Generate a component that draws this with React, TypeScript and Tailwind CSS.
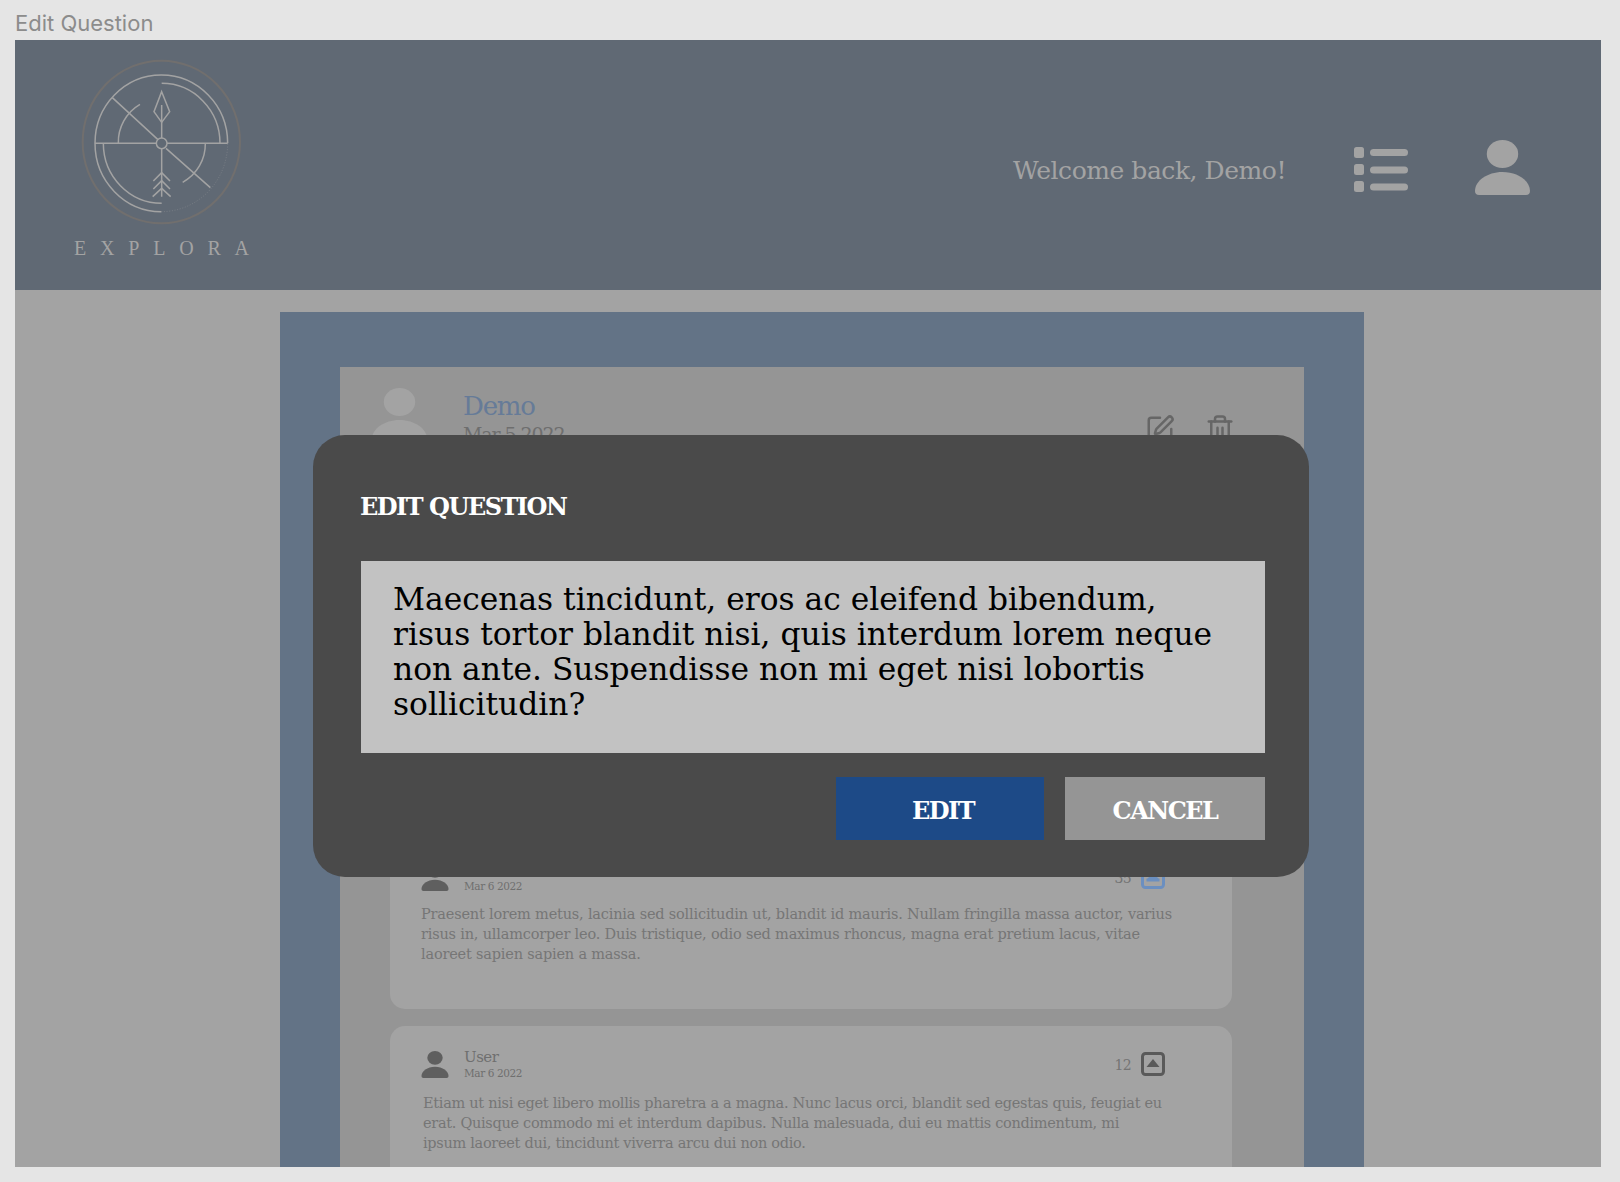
import { SquarePen, Trash2 } from "lucide-react"

const slab = "font-['DejaVu_Serif',serif]"

function Logo() {
  return (
    <svg width="210" height="186" viewBox="0 0 630 558" fill="none" stroke="#a3a3a3" strokeWidth="4.500">
      <ellipse cx="304" cy="276" rx="236" ry="244" stroke="#716f6e" strokeWidth="6" />
      <path d="M503 280A199 205 0 1 0 304 485" />
      <path d="M304 485A199 205 0 0 0 503 280" strokeOpacity=".35" strokeDasharray="3 5" strokeWidth="3" />
      <path d="M105 280H289M321 280H503" />
      <circle cx="305" cy="280" r="16" />
      <path d="M305 165V264M305 296V440" />
      <path d="M305 125L329 185L305 217L282 185Z" />
      <path d="M157 143L293 268M318 295L451 413" />
      <path d="M305 100A175 180 0 0 1 480 280" />
      <path d="M130 280A175 180 0 0 0 305 460" />
      <path d="M175 280A131 131 0 0 1 240 163" />
      <path d="M436 280A131 131 0 0 1 368 397" />
      <path d="M280 393L305 368L330 393M280 417L305 392L330 417M278 440L305 415L332 440" />
    </svg>
  )
}

function ListIcon() {
  return (
    <svg width="54" height="45" viewBox="0 0 54 45" fill="#a3a3a3">
      <rect x="0" y="0" width="10" height="11" rx="2.5" />
      <rect x="0" y="17" width="10" height="11" rx="2.5" />
      <rect x="0" y="34" width="10" height="11" rx="2.5" />
      <rect x="16" y="2" width="38" height="7" rx="3.5" />
      <rect x="16" y="19.5" width="38" height="7" rx="3.5" />
      <rect x="16" y="36.5" width="38" height="7" rx="3.5" />
    </svg>
  )
}

function UserIcon({ className, fill }: { className: string; fill: string }) {
  return (
    <svg className={className} viewBox="0 0 55 55" fill={fill}>
      <ellipse cx="27.5" cy="14" rx="15.7" ry="14" />
      <path d="M0 51C0 41 12 32 27.5 32S55 41 55 51C55 53.5 53.5 55 51 55H4C1.500 55 0 53.500 0 51Z" />
    </svg>
  )
}

function Upvote({ color, active }: { color: string; active?: boolean }) {
  return (
    <svg width="24" height="24" viewBox="0 0 24 24" fill="none">
      <rect x="1.500" y="1.500" width="21" height="21" rx="3" stroke={color} strokeWidth="3" />
      <path d="M12 7L18.500 15H5.500Z" fill={color} />
      {active && <rect x="5.500" y="13.500" width="13" height="3" fill={color} />}
    </svg>
  )
}

function Answer({ votes, active, text, textClass, className }: { votes: number; active?: boolean; text: string[]; textClass: string; className: string }) {
  return (
    <div className={`w-[842px] rounded-[15px] bg-[#a3a3a3] px-[31px] ${className}`}>
      <div className="flex items-start">
        <UserIcon className="h-[27px] w-[28px]" fill="#5f5f5f" />
        <div className="ml-[15px] -mt-[3px]">
          <div className={`${slab} text-[15px] leading-[19px] tracking-[-0.5px] text-[#6f6f6f]`}>User</div>
          <div className={`${slab} text-[10.5px] leading-[12px] tracking-[-0.4px] text-[#6f6f6f]`}>Mar 6 2022</div>
        </div>
        <div className="ml-auto mr-[36px] mt-[1px] flex items-center gap-[10px]">
          <span className={`${slab} mt-[2px] text-[14px] tracking-[-0.7px] text-[#747474]`}>{votes}</span>
          <Upvote color={active ? "#6b8fc0" : "#5a5a5a"} active={active} />
        </div>
      </div>
      <p className={`${slab} ${textClass} text-[14.500px] leading-[20px] text-[#767676]`}>
        {text.map((line) => (
          <span key={line} className="block whitespace-nowrap">{line}</span>
        ))}
      </p>
    </div>
  )
}

export default function App() {
  return (
    <div className="h-[1182px] w-[1620px] overflow-hidden bg-[#e5e5e5] pl-[15px]">
      <div className="flex h-[40px] items-start pt-[10px] font-['Inter',sans-serif] text-[22px] leading-[27px] text-[#8c8c8c]">Edit Question</div>

      <div className="relative h-[1127px] w-[1586px] overflow-hidden bg-[#a3a3a3]">
        {/* header */}
        <div className="flex h-[250px] items-start bg-[#606974] pl-[45px] pt-[10px] pr-[71px]">
          <div>
            <Logo />
            <div className="ml-[14px] mt-[1px] whitespace-nowrap font-['Liberation_Serif',serif] text-[20px] leading-[22px] tracking-[13.800px] text-[#a3a3a3]">EXPLORA</div>
          </div>
          <div className="ml-auto mt-[90px] flex h-[55px] items-center">
            <span className={`${slab} mt-[7px] text-[25px] tracking-[-0.45px] text-[#a3a3a3]`}>Welcome back, Demo!</span>
            <div className="ml-[68px] mt-[4px]"><ListIcon /></div>
            <UserIcon className="ml-[67px] h-[55px] w-[55px]" fill="#a3a3a3" />
          </div>
        </div>

        {/* question + answers */}
        <div className="pl-[265px] pt-[22px]">
          <div className="h-[900px] w-[1084px] bg-[#637386] pl-[60px] pt-[55px]">
            <div className="h-[900px] w-[964px] bg-[#959595]">
              <div className="flex items-start pl-[32px] pt-[21px] pr-[69px]">
                <UserIcon className="h-[55px] w-[55px]" fill="#a3a3a3" />
                <div className="ml-[36px]">
                  <div className={`${slab} mt-[2px] text-[26px] leading-[32px] tracking-[-1.200px] text-[#667b98]`}>Demo</div>
                  <div className={`${slab} text-[19px] leading-[24px] tracking-[-1.100px] text-[#6e6e6e]`}>Mar 5 2022</div>
                </div>
                <div className="ml-auto mt-[26px] flex gap-[30px] text-[#666666]">
                  <SquarePen className="h-[30px] w-[30px]" strokeWidth={2} />
                  <Trash2 className="h-[30px] w-[30px]" strokeWidth={2} />
                </div>
              </div>
              <div className="h-[393px]" />
              <div className="flex flex-col gap-[17px] pl-[50px]">
                <Answer
                  votes={35}
                  active
                  className="h-[170px] pt-[25px]"
                  textClass="mt-[12px] tracking-[-0.19px]"
                  text={[
                    "Praesent lorem metus, lacinia sed sollicitudin ut, blandit id mauris. Nullam fringilla massa auctor, varius",
                    "risus in, ullamcorper leo. Duis tristique, odio sed maximus rhoncus, magna erat pretium lacus, vitae",
                    "laoreet sapien sapien a massa.",
                  ]}
                />
                <Answer
                  votes={12}
                  className="h-[170px] pt-[25px]"
                  textClass="mt-[14px] ml-[2px] tracking-[-0.3px]"
                  text={[
                    "Etiam ut nisi eget libero mollis pharetra a a magna. Nunc lacus orci, blandit sed egestas quis, feugiat eu",
                    "erat. Quisque commodo mi et interdum dapibus. Nulla malesuada, dui eu mattis condimentum, mi",
                    "ipsum laoreet dui, tincidunt viverra arcu dui non odio.",
                  ]}
                />
              </div>
            </div>
          </div>
        </div>

        {/* edit modal */}
        <div className="absolute left-[298px] top-[395px] h-[442px] w-[996px] rounded-[32px] bg-[#4a4a4a] pl-[48px] pr-[44px] pt-[54px]">
          <h2 className={`-ml-px ${slab} text-[24px] font-bold leading-[36px] tracking-[-1.500px] text-white`}>EDIT QUESTION</h2>
          <div className={`${slab} mt-[36px] h-[192px] bg-[#c2c2c2] pl-[32px] pt-[21px] text-[31.300px] leading-[35px] text-black`}>
            Maecenas tincidunt, eros ac eleifend bibendum,<br />
            risus tortor blandit nisi, quis interdum lorem neque<br />
            non ante. Suspendisse non mi eget nisi lobortis<br />
            sollicitudin?
          </div>
          <div className="mt-[24px] flex justify-end gap-[21px]">
            <button className={`${slab} h-[63px] w-[208px] bg-[#1d4a87] pl-[6px] pt-[4px] text-[24px] font-bold tracking-[-1.500px] text-white`}>EDIT</button>
            <button className={`${slab} h-[63px] w-[200px] bg-[#959595] pt-[4px] text-[24px] font-bold tracking-[-1.500px] text-white`}>CANCEL</button>
          </div>
        </div>
      </div>
    </div>
  )
}
